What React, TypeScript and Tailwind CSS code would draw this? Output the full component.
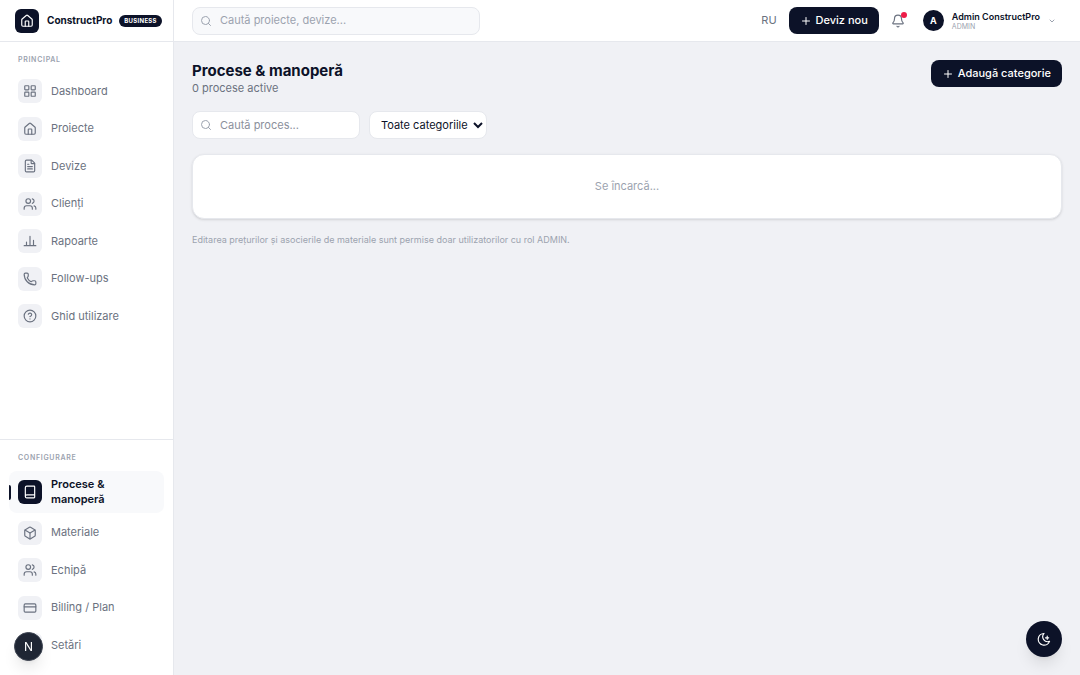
import React, { useState } from 'react';
import {
  Bell,
  Book,
  Box,
  ChevronDown,
  CircleQuestionMark,
  CreditCard,
  FileText,
  House,
  LayoutGrid,
  Phone,
  Plus,
  Search,
  Settings,
  Users,
} from 'lucide-react';

interface IconProps {
  className?: string;
  strokeWidth?: number;
}

interface NavItem {
  label: string;
  icon: React.ComponentType<IconProps>;
  active?: boolean;
}

function ReportIcon({ className, strokeWidth = 2 }: IconProps) {
  return (
    <svg
      viewBox="0 0 24 24"
      fill="none"
      stroke="currentColor"
      strokeWidth={strokeWidth}
      strokeLinecap="round"
      strokeLinejoin="round"
      className={className}
    >
      <path d="M2 20h20M6 20v-6M12 20V4M18 20v-9" />
    </svg>
  );
}

function MoonIcon({ className }: IconProps) {
  return (
    <svg
      viewBox="0 0 24 24"
      fill="none"
      stroke="currentColor"
      strokeWidth={2}
      strokeLinecap="round"
      strokeLinejoin="round"
      className={className}
    >
      <path d="M12 2.5a10 10 0 1 0 9.5 13.5A8.5 8.5 0 0 1 12 2.5Z" />
      <path d="M14.5 10h5.5M17.5 7v5.5" />
    </svg>
  );
}

const mainItems: NavItem[] = [
  { label: 'Dashboard', icon: LayoutGrid },
  { label: 'Proiecte', icon: House },
  { label: 'Devize', icon: FileText },
  { label: 'Clienți', icon: Users },
  { label: 'Rapoarte', icon: ReportIcon },
  { label: 'Follow-ups', icon: Phone },
  { label: 'Ghid utilizare', icon: CircleQuestionMark },
];

const configItems: NavItem[] = [
  { label: 'Procese & manoperă', icon: Book, active: true },
  { label: 'Materiale', icon: Box },
  { label: 'Echipă', icon: Users },
  { label: 'Billing / Plan', icon: CreditCard },
  { label: 'Setări', icon: Settings },
];

function NavLink({ label, icon: Icon, active }: NavItem) {
  return (
    <a
      href="#"
      aria-current={active ? 'page' : undefined}
      className={`relative flex min-h-9 items-center gap-[9px] rounded-lg px-[9px] text-[11px] leading-[15px] ${
        active ? 'bg-[#f8f9fb] py-1.5 font-semibold text-[#0c1228]' : 'text-[#6b7280]'
      }`}
    >
      {active && <span className="absolute left-0 h-[15px] w-0.5 rounded-r bg-[#0c1228]" />}
      <span
        className={`flex size-6 shrink-0 items-center justify-center rounded-md ${
          active ? 'bg-[#0c1228] text-white' : 'bg-[#f0f1f5] text-[#6b7280]'
        }`}
      >
        <Icon className="size-[14px]" strokeWidth={2} />
      </span>
      <span className={active ? 'max-w-20' : ''}>{label}</span>
    </a>
  );
}

function Sidebar() {
  return (
    <aside className="flex w-[174px] shrink-0 flex-col border-r border-[#e6e8ed] bg-white">
      <div className="flex h-[42px] items-center border-b border-[#e6e8ed] pl-[15px]">
        <span className="flex size-6 items-center justify-center rounded-md bg-[#0c1228] text-white">
          <House className="size-[14px]" strokeWidth={2} />
        </span>
        <span className="ml-2 text-[10px] font-bold text-[#0c1228]">ConstructPro</span>
        <span className="ml-[7px] rounded-full bg-[#0c1228] px-[5px] text-[6px] leading-3 font-bold tracking-wider text-white">
          BUSINESS
        </span>
      </div>

      <div className="flex-1 px-[9px] pt-3">
        <h2 className="px-[9px] text-[7px] leading-3 font-semibold tracking-widest text-[#9ca3af]">PRINCIPAL</h2>
        <nav className="mt-[7px] flex h-[261px] flex-col justify-between">
          {mainItems.map((item) => (
            <NavLink key={item.label} {...item} />
          ))}
        </nav>
      </div>

      <div className="border-t border-[#e6e8ed] px-[9px] pt-3 pb-3">
        <h2 className="px-[9px] text-[7px] leading-3 font-semibold tracking-widest text-[#9ca3af]">CONFIGURARE</h2>
        <nav className="mt-[7px] flex h-48 flex-col justify-between">
          {configItems.map((item) => (
            <NavLink key={item.label} {...item} />
          ))}
        </nav>
      </div>
    </aside>
  );
}

function TopBar() {
  return (
    <header className="flex h-[42px] items-center border-b border-[#e6e8ed] bg-white px-[18px]">
      <label className="flex h-7 w-72 items-center gap-2 rounded-lg border border-[#e6e8ed] bg-[#f8f9fb] px-[7px]">
        <Search className="size-3 shrink-0 text-[#9ca3af]" />
        <input
          type="search"
          aria-label="Caută proiecte"
          placeholder="Caută proiecte, devize..."
          className="w-full bg-transparent text-[11px] outline-none placeholder:text-[#9ca3af]"
        />
      </label>

      <div className="ml-auto flex items-center">
        <button className="text-[11px] text-[#6b7280]">RU</button>
        <button className="ml-3 flex h-[27px] items-center gap-1 rounded-lg bg-[#0c1228] px-[11px] text-[11px] font-medium text-white">
          <Plus className="size-3" strokeWidth={2} />
          Deviz nou
        </button>
        <button aria-label="Notificări" className="relative ml-3 text-[#6b7280]">
          <Bell className="size-[14px]" strokeWidth={2} />
          <span className="absolute -top-0.5 -right-0.5 size-1.5 rounded-full bg-[#ee1d48]" />
        </button>
        <button className="ml-[18px] flex items-center pr-1.5 text-left">
          <span className="flex size-[21px] items-center justify-center rounded-full bg-[#0c1228] text-[9px] font-bold text-white">
            A
          </span>
          <span className="ml-2 block">
            <span className="block text-[9px] leading-[11px] font-semibold text-[#0c1228]">Admin ConstructPro</span>
            <span className="block text-[7px] leading-[9px] text-[#9ca3af]">ADMIN</span>
          </span>
          <ChevronDown className="ml-2 size-2 text-[#9ca3af]" strokeWidth={3} />
        </button>
      </div>
    </header>
  );
}

export default function App() {
  const [query, setQuery] = useState('');
  const [category, setCategory] = useState('all');

  return (
    <div className="flex min-h-screen bg-[#f0f1f5] font-[Inter,sans-serif] text-[#0c1228]">
      <Sidebar />

      <div className="min-w-0 flex-1">
        <TopBar />

        <main className="px-[18px] pt-[18px]">
          <div className="flex items-start justify-between">
            <div>
              <h1 className="text-[15px] leading-[21px] font-bold">Procese &amp; manoperă</h1>
              <p className="text-[11px] leading-[15px] text-[#6b7280]">0 procese active</p>
            </div>
            <button className="flex h-[27px] items-center gap-1 rounded-lg bg-[#0c1228] px-[11px] text-[11px] font-medium text-white">
              <Plus className="size-3" strokeWidth={2} />
              Adaugă categorie
            </button>
          </div>

          <div className="mt-[15px] flex gap-[9px]">
            <label className="flex h-7 w-42 items-center gap-2 rounded-lg border border-[#e6e8ed] bg-white px-[7px]">
              <Search className="size-3 shrink-0 text-[#9ca3af]" />
              <input
                type="search"
                aria-label="Caută proces"
                placeholder="Caută proces..."
                value={query}
                onChange={(e) => setQuery(e.target.value)}
                className="w-full bg-transparent text-[11px] outline-none placeholder:text-[#8b909c]"
              />
            </label>
            <select
              aria-label="Categorie"
              value={category}
              onChange={(e) => setCategory(e.target.value)}
              className="h-7 w-[118px] rounded-lg border border-[#e6e8ed] bg-white pl-[7px] text-[11px]"
            >
              <option value="all">Toate categoriile</option>
            </select>
          </div>

          <div className="mt-[15px] rounded-xl border border-[#e6e8ed] bg-white py-6 text-center text-[11px] leading-[15px] text-[#9ca3af] shadow-sm">
            Se încarcă...
          </div>

          <p className="mt-[15px] text-[9px] leading-3 text-[#9ca3af]">
            Editarea prețurilor și asocierile de materiale sunt permise doar utilizatorilor cu rol ADMIN.
          </p>
        </main>
      </div>

      {/* Dev tools badge */}
      <button
        aria-label="Next.js"
        className="fixed bottom-[14px] left-[14px] flex size-[29px] items-center justify-center rounded-full border border-[#3b424f] bg-[#1f2634] text-[12px] text-white shadow-lg"
      >
        N
      </button>

      {/* Theme toggle */}
      <button
        aria-label="Schimbă tema"
        className="fixed right-[18px] bottom-[18px] flex size-9 items-center justify-center rounded-full bg-[#0c1228] text-white shadow-lg"
      >
        <MoonIcon className="size-[14px]" />
      </button>
    </div>
  );
}
